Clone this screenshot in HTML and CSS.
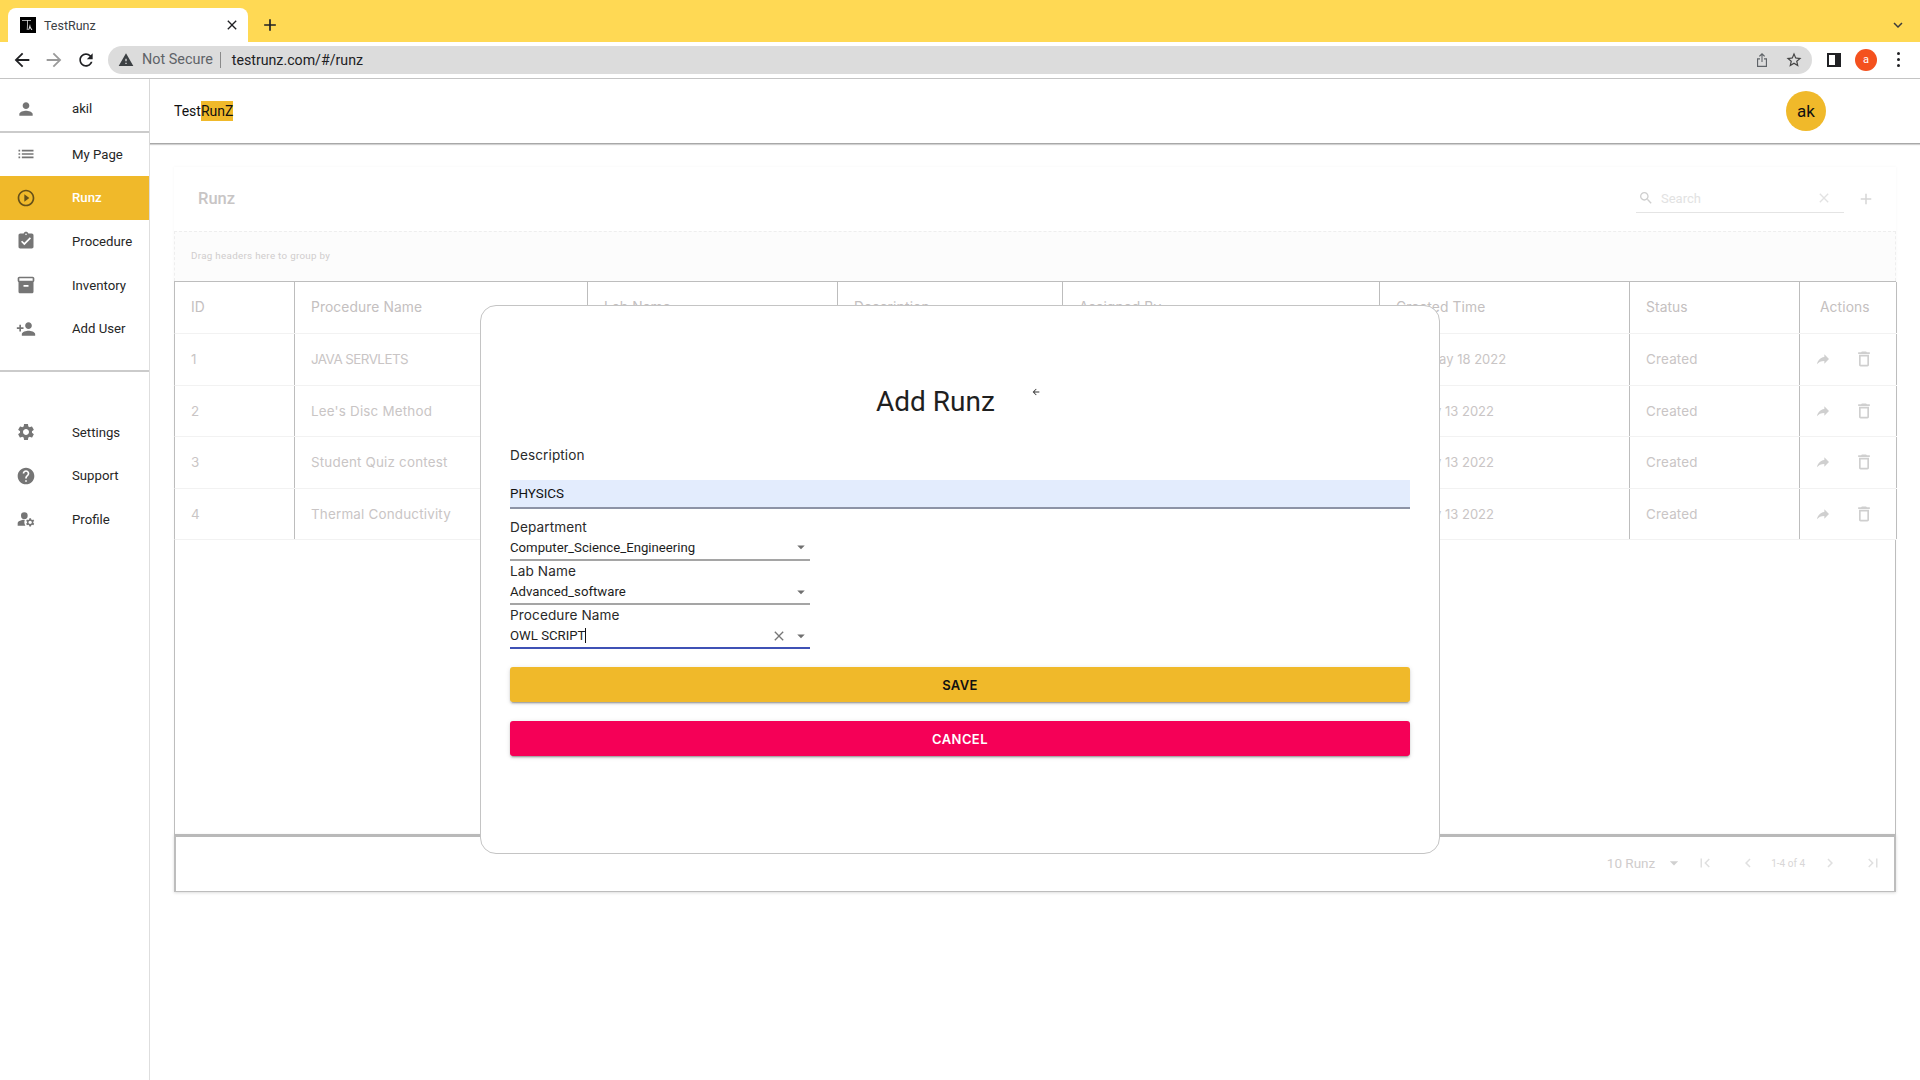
FILE: index.html
```html
<!DOCTYPE html>
<html lang="en">
<head>
<meta charset="utf-8">
<title>TestRunz</title>
<link rel="stylesheet" href="styles.css">
</head>
<body>
<svg class="defs" width="0" height="0" aria-hidden="true">
  <symbol id="i-person" viewBox="0 0 24 24"><path d="M12 12c2.21 0 4-1.79 4-4s-1.79-4-4-4-4 1.79-4 4 1.79 4 4 4zm0 2c-2.67 0-8 1.34-8 4v2h16v-2c0-2.66-5.33-4-8-4z"/></symbol>
  <symbol id="i-list" viewBox="0 0 24 24"><path d="M3 13h2v-2H3v2zm0 4h2v-2H3v2zm0-8h2V7H3v2zm4 4h14v-2H7v2zm0 4h14v-2H7v2zM7 7v2h14V7H7z"/></symbol>
  <symbol id="i-play" viewBox="0 0 24 24"><path d="M10 16.5l6-4.5-6-4.5v9zM12 2C6.48 2 2 6.48 2 12s4.48 10 10 10 10-4.48 10-10S17.52 2 12 2zm0 18c-4.41 0-8-3.59-8-8s3.59-8 8-8 8 3.59 8 8-3.59 8-8 8z"/></symbol>
  <symbol id="i-assign" viewBox="0 0 24 24"><path d="M19 3h-4.18C14.4 1.84 13.3 1 12 1c-1.3 0-2.4.84-2.82 2H5c-1.1 0-2 .9-2 2v14c0 1.1.9 2 2 2h14c1.1 0 2-.9 2-2V5c0-1.1-.9-2-2-2zm-7 0c.55 0 1 .45 1 1s-.45 1-1 1-1-.45-1-1 .45-1 1-1zm-2 14l-4-4 1.41-1.41L10 14.17l6.59-6.59L18 9l-8 8z"/></symbol>
  <symbol id="i-box" viewBox="0 0 24 24"><path d="M20 2H4c-1 0-2 .9-2 2v3.01c0 .72.43 1.34 1 1.69V20c0 1.1 1.1 2 2 2h14c.9 0 2-.9 2-2V8.7c.57-.35 1-.97 1-1.69V4c0-1.1-1-2-2-2zm-5 12H9v-2h6v2zm5-7H4V4l16-.02V7z"/></symbol>
  <symbol id="i-adduser" viewBox="0 0 24 24"><path d="M15 12c2.21 0 4-1.79 4-4s-1.79-4-4-4-4 1.79-4 4 1.79 4 4 4zm-9-2V7H4v3H1v2h3v3h2v-3h3v-2H6zm9 4c-2.67 0-8 1.34-8 4v2h16v-2c0-2.66-5.33-4-8-4z"/></symbol>
  <symbol id="i-gear" viewBox="0 0 24 24"><path d="M19.14 12.94c.04-.3.06-.61.06-.94 0-.32-.02-.64-.07-.94l2.03-1.58c.18-.14.23-.41.12-.61l-1.92-3.32c-.12-.22-.37-.29-.59-.22l-2.39.96c-.5-.38-1.03-.7-1.62-.94l-.36-2.54c-.04-.24-.24-.41-.48-.41h-3.84c-.24 0-.43.17-.47.41l-.36 2.54c-.59.24-1.13.57-1.62.94l-2.39-.96c-.22-.08-.47 0-.59.22L2.74 8.87c-.12.21-.08.47.12.61l2.03 1.58c-.05.3-.09.63-.09.94s.02.64.07.94l-2.03 1.58c-.18.14-.23.41-.12.61l1.92 3.32c.12.22.37.29.59.22l2.39-.96c.5.38 1.03.7 1.62.94l.36 2.54c.05.24.24.41.48.41h3.84c.24 0 .44-.17.47-.41l.36-2.54c.59-.24 1.13-.56 1.62-.94l2.39.96c.22.08.47 0 .59-.22l1.92-3.32c.12-.22.07-.47-.12-.61l-2.01-1.58zM12 15.6c-1.98 0-3.6-1.62-3.6-3.6s1.62-3.6 3.6-3.6 3.6 1.62 3.6 3.6-1.62 3.6-3.6 3.6z"/></symbol>
  <symbol id="i-help" viewBox="0 0 24 24"><path d="M12 2C6.48 2 2 6.48 2 12s4.48 10 10 10 10-4.48 10-10S17.52 2 12 2zm1 17h-2v-2h2v2zm2.07-7.75l-.9.92C13.45 12.9 13 13.5 13 15h-2v-.5c0-1.1.45-2.1 1.17-2.83l1.24-1.26c.37-.36.59-.86.59-1.41 0-1.1-.9-2-2-2s-2 .9-2 2H8c0-2.21 1.79-4 4-4s4 1.79 4 4c0 .88-.36 1.68-.93 2.25z"/></symbol>
  <symbol id="i-manage" viewBox="0 0 24 24"><circle cx="10" cy="8" r="4"/><path d="M10.67 13.02C10.45 13.01 10.23 13 10 13c-2.42 0-4.68.67-6.61 1.82C2.51 15.34 2 16.32 2 17.35V20h9.26c-.79-1.13-1.26-2.51-1.26-4 0-1.07.25-2.07.67-2.98zM20.75 16c0-.22-.03-.42-.06-.63l1.14-1.01-1-1.73-1.45.49c-.32-.27-.68-.48-1.08-.63L18 11h-2l-.3 1.49c-.4.15-.76.36-1.08.63l-1.45-.49-1 1.73 1.14 1.01c-.03.21-.06.41-.06.63s.03.42.06.63l-1.14 1.01 1 1.73 1.45-.49c.32.27.68.48 1.08.63L16 21h2l.3-1.49c.4-.15.76-.36 1.08-.63l1.45.49 1-1.73-1.14-1.01c.03-.21.06-.41.06-.63zM17 18c-1.1 0-2-.9-2-2s.9-2 2-2 2 .9 2 2-.9 2-2 2z"/></symbol>
  <symbol id="i-forward" viewBox="0 0 24 24"><path d="M14 9V5l7 7-7 7v-4.1c-5 0-8.5 1.6-11 5.1 1-5 4-10 11-11z"/></symbol>
  <symbol id="i-trash" viewBox="0 0 24 24"><path d="M6 19c0 1.1.9 2 2 2h8c1.1 0 2-.9 2-2V7H6v12zM8 9h8v10H8V9zm7.5-5l-1-1h-5l-1 1H5v2h14V4z"/></symbol>
  <symbol id="i-search" viewBox="0 0 24 24"><path d="M15.5 14h-.79l-.28-.27C15.41 12.59 16 11.11 16 9.5 16 5.91 13.09 3 9.5 3S3 5.91 3 9.5 5.91 16 9.5 16c1.61 0 3.09-.59 4.23-1.57l.27.28v.79l5 4.99L20.49 19l-4.99-5zm-6 0C7.01 14 5 11.99 5 9.5S7.01 5 9.5 5 14 7.01 14 9.5 11.99 14 9.5 14z"/></symbol>
  <symbol id="i-clear" viewBox="0 0 24 24"><path d="M19 6.41L17.59 5 12 10.59 6.41 5 5 6.41 10.59 12 5 17.59 6.41 19 12 13.41 17.59 19 19 17.59 13.41 12z"/></symbol>
  <symbol id="i-add" viewBox="0 0 24 24"><path d="M19 13h-6v6h-2v-6H5v-2h6V5h2v6h6v2z"/></symbol>
  <symbol id="i-drop" viewBox="0 0 24 24"><path d="M7 10l5 5 5-5z"/></symbol>
  <symbol id="i-first" viewBox="0 0 24 24"><path d="M18.41 16.59L13.82 12l4.59-4.59L17 6l-6 6 6 6zM6 6h2v12H6z"/></symbol>
  <symbol id="i-prev" viewBox="0 0 24 24"><path d="M15.41 7.41L14 6l-6 6 6 6 1.41-1.41L10.83 12z"/></symbol>
  <symbol id="i-next" viewBox="0 0 24 24"><path d="M10 6L8.59 7.41 13.17 12l-4.58 4.59L10 18l6-6z"/></symbol>
  <symbol id="i-last" viewBox="0 0 24 24"><path d="M5.59 7.41L10.18 12l-4.59 4.59L7 18l6-6-6-6zM16 6h2v12h-2z"/></symbol>
  <symbol id="i-back" viewBox="0 0 24 24"><path d="M20 11H7.83l5.59-5.59L12 4l-8 8 8 8 1.41-1.41L7.83 13H20v-2z"/></symbol>
  <symbol id="i-reload" viewBox="0 0 24 24"><path d="M17.65 6.35C16.2 4.9 14.21 4 12 4c-4.42 0-7.99 3.58-7.99 8s3.57 8 7.99 8c3.73 0 6.84-2.55 7.73-6h-2.08c-.82 2.33-3.04 4-5.65 4-3.31 0-6-2.69-6-6s2.69-6 6-6c1.66 0 3.14.69 4.22 1.78L13 11h7V4l-2.35 2.35z"/></symbol>
  <symbol id="i-warn" viewBox="0 0 24 24"><path d="M1 21h22L12 2 1 21zm12-3h-2v-2h2v2zm0-4h-2v-4h2v4z"/></symbol>
  <symbol id="i-star" viewBox="0 0 24 24"><path d="M22 9.24l-7.19-.62L12 2 9.19 8.63 2 9.24l5.46 4.73L5.82 21 12 17.27 18.18 21l-1.63-7.03L22 9.24zM12 15.4l-3.76 2.27 1-4.28-3.32-2.88 4.38-.38L12 6.1l1.71 4.04 4.38.38-3.32 2.88 1 4.28L12 15.4z"/></symbol>
  <symbol id="i-share" viewBox="0 0 24 24"><path d="M12 1.5l4.6 4.6-1.2 1.2-2.6-2.6V15h-1.6V4.7L8.6 7.3 7.4 6.1 12 1.5zM4.5 9.5H9v1.7H6.2v9.6h11.6v-9.6H15V9.5h4.5v13h-15v-13z"/></symbol>
  <symbol id="i-chev" viewBox="0 0 24 24"><path d="M7.41 8.59L12 13.17l4.59-4.58L18 10l-6 6-6-6z"/></symbol>
</svg>

<header class="tabstrip">
  <div class="tab">
    <span class="favicon"><svg viewBox="0 0 16 16" class="fav-svg"><path d="M2 3h9v.8H8l-.4 9.2H6.8L7.200 3.800H2z"/><path d="M10 7l.6 3 1.900 3h-1.200L10 11l-1 2H8.200z"/></svg></span>
    <span class="tab-title">TestRunz</span>
    <svg class="ic tab-close"><use href="#i-clear"/></svg>
  </div>
  <svg class="ic new-tab"><use href="#i-add"/></svg>
  <svg class="ic tab-menu"><use href="#i-chev"/></svg>
</header>

<div class="toolbar">
  <svg class="ic nav-ic"><use href="#i-back"/></svg>
  <svg class="ic nav-ic nav-off"><use href="#i-back"/></svg>
  <svg class="ic nav-ic nav-reload"><use href="#i-reload"/></svg>
  <div class="omnibox">
    <svg class="ic warn"><use href="#i-warn"/></svg>
    <span class="not-secure">Not Secure</span>
    <span class="omni-sep"></span>
    <span class="url">testrunz.com/#/runz</span>
    <svg class="ic omni-share"><use href="#i-share"/></svg>
    <svg class="ic omni-star"><use href="#i-star"/></svg>
  </div>
  <span class="panel-ic"></span>
  <span class="chrome-avatar">a</span>
  <span class="dots"><i></i><i></i><i></i></span>
</div>

<div class="app">
  <aside class="sidebar">
    <div class="nav-item nav-user"><svg class="ic nav-svg"><use href="#i-person"/></svg><span>akil</span></div>
    <div class="rule"></div>
    <div class="nav-item"><svg class="ic nav-svg"><use href="#i-list"/></svg><span>My Page</span></div>
    <div class="nav-item active"><svg class="ic nav-svg"><use href="#i-play"/></svg><span>Runz</span></div>
    <div class="nav-item"><svg class="ic nav-svg"><use href="#i-assign"/></svg><span>Procedure</span></div>
    <div class="nav-item"><svg class="ic nav-svg"><use href="#i-box"/></svg><span>Inventory</span></div>
    <div class="nav-item"><svg class="ic nav-svg"><use href="#i-adduser"/></svg><span>Add User</span></div>
    <div class="rule rule-lower"></div>
    <div class="nav-item"><svg class="ic nav-svg"><use href="#i-gear"/></svg><span>Settings</span></div>
    <div class="nav-item"><svg class="ic nav-svg"><use href="#i-help"/></svg><span>Support</span></div>
    <div class="nav-item"><svg class="ic nav-svg"><use href="#i-manage"/></svg><span>Profile</span></div>
  </aside>

  <main class="main">
    <div class="topbar">
      <div class="brand">Test<span class="brand-mark">RunZ</span></div>
      <div class="user-avatar">ak</div>
    </div>
    <div class="content">
      <section class="card">
        <div class="card-head">
          <h2 class="card-title">Runz</h2>
          <div class="search">
            <svg class="ic search-ic"><use href="#i-search"/></svg>
            <span class="search-text">Search</span>
            <svg class="ic search-clear"><use href="#i-clear"/></svg>
          </div>
          <svg class="ic card-add"><use href="#i-add"/></svg>
        </div>
        <div class="group-bar">Drag headers here to group by</div>
        <div class="row row-head">
          <div class="cell">ID</div><div class="cell">Procedure Name</div><div class="cell">Lab Name</div><div class="cell">Description</div><div class="cell">Assigned By</div><div class="cell">Created Time</div><div class="cell">Status</div><div class="cell cell-actions-head">Actions</div>
        </div>
        <div class="row">
          <div class="cell">1</div><div class="cell cell-upper">JAVA SERVLETS</div><div class="cell"></div><div class="cell"></div><div class="cell"></div><div class="cell cell-date">Wed May 18 2022</div><div class="cell">Created</div>
          <div class="cell actions"><svg class="ic act"><use href="#i-forward"/></svg><svg class="ic act"><use href="#i-trash"/></svg></div>
        </div>
        <div class="row">
          <div class="cell">2</div><div class="cell">Lee's Disc Method</div><div class="cell"></div><div class="cell"></div><div class="cell"></div><div class="cell cell-date">Fri May 13 2022</div><div class="cell">Created</div>
          <div class="cell actions"><svg class="ic act"><use href="#i-forward"/></svg><svg class="ic act"><use href="#i-trash"/></svg></div>
        </div>
        <div class="row">
          <div class="cell">3</div><div class="cell">Student Quiz contest</div><div class="cell"></div><div class="cell"></div><div class="cell"></div><div class="cell cell-date">Fri May 13 2022</div><div class="cell">Created</div>
          <div class="cell actions"><svg class="ic act"><use href="#i-forward"/></svg><svg class="ic act"><use href="#i-trash"/></svg></div>
        </div>
        <div class="row">
          <div class="cell">4</div><div class="cell">Thermal Conductivity</div><div class="cell"></div><div class="cell"></div><div class="cell"></div><div class="cell cell-date">Fri May 13 2022</div><div class="cell">Created</div>
          <div class="cell actions"><svg class="ic act"><use href="#i-forward"/></svg><svg class="ic act"><use href="#i-trash"/></svg></div>
        </div>
        <div class="table-fill"></div>
        <div class="pager">
          <span class="pager-size">10 Runz</span>
          <svg class="ic pager-drop"><use href="#i-drop"/></svg>
          <svg class="ic pg pg-first"><use href="#i-first"/></svg>
          <svg class="ic pg pg-prev"><use href="#i-prev"/></svg>
          <span class="pager-count">1-4 of 4</span>
          <svg class="ic pg pg-next"><use href="#i-next"/></svg>
          <svg class="ic pg pg-last"><use href="#i-last"/></svg>
        </div>
      </section>
    </div>
  </main>
</div>

<div class="modal">
  <div class="modal-head">
    <h1 class="modal-title">Add Runz</h1>
    <svg class="ic modal-back"><use href="#i-back"/></svg>
  </div>
  <div class="field-label desc-label">Description</div>
  <div class="desc-input">PHYSICS</div>
  <div class="select select-first">
    <div class="field-label">Department</div>
    <div class="select-value"><span>Computer_Science_Engineering</span><svg class="ic sel-drop"><use href="#i-drop"/></svg></div>
  </div>
  <div class="select">
    <div class="field-label">Lab Name</div>
    <div class="select-value"><span>Advanced_software</span><svg class="ic sel-drop"><use href="#i-drop"/></svg></div>
  </div>
  <div class="select select-focus">
    <div class="field-label">Procedure Name</div>
    <div class="select-value"><span class="caret">OWL SCRIPT</span><svg class="ic sel-clear"><use href="#i-clear"/></svg><svg class="ic sel-drop"><use href="#i-drop"/></svg></div>
  </div>
  <div class="btn btn-save">SAVE</div>
  <div class="btn btn-cancel">CANCEL</div>
</div>
</body>
</html>
```

FILE: styles.css
```css
* { box-sizing: border-box; }
html, body { margin: 0; height: 1080px; overflow: hidden; background: #fff; }
body { position: relative; font-family: Roboto, "Liberation Sans", sans-serif; color: #202124; }
.defs { position: absolute; }
.ic { display: block; width: 24px; height: 24px; fill: currentColor; flex: none; }

/* browser chrome */
.tabstrip { height: 42px; background: #ffd954; display: flex; align-items: flex-end; padding-left: 8px; }
.tab { width: 240px; height: 34px; background: #fff; border-radius: 8px 8px 0 0; display: flex; align-items: center; padding: 0 8px 0 12px; }
.favicon { width: 16px; height: 16px; background: #000; display: block; margin-right: 8px; }
.fav-svg { display: block; width: 16px; height: 16px; fill: #ddd; }
.tab-title { font-size: 12.5px; color: #3c4043; flex: 1; }
.tab-close { width: 16px; height: 16px; color: #202124; }
.new-tab { width: 20px; height: 20px; margin: 0 0 7px 12px; color: #202124; }
.tab-menu { width: 18px; height: 18px; margin: 0 13px 8px auto; color: #3c3c3c; }

.toolbar { height: 37px; background: #fff; border-bottom: 1px solid #c4c4c4; display: flex; align-items: center; padding: 0 0 1px 11px; }
.nav-ic { width: 22px; height: 22px; margin-right: 10px; color: #202124; }
.nav-off { transform: scaleX(-1); color: #9a9a9a; }
.nav-reload { width: 20px; height: 20px; margin: 0 12px 0 1px; }
.omnibox { width: 1704px; height: 28px; background: #dcdcdc; border-radius: 14px; display: flex; align-items: center; padding-left: 10px; }
.warn { width: 16px; height: 16px; color: #3c4043; margin-right: 8px; }
.not-secure { font-size: 14.4px; color: #5f6368; }
.omni-sep { width: 1px; height: 16px; background: #8a8a8a; margin: 0 11px 0 7px; }
.url { font-size: 14.2px; color: #202124; flex: 1; }
.omni-share { width: 16px; height: 16px; color: #5f6368; margin-right: 15px; }
.omni-star { width: 18px; height: 18px; color: #444; margin-right: 9px; }
.panel-ic { width: 14px; height: 14px; border: 2px solid #202124; border-right-width: 6px; background: #fff; margin-left: 15px; }
.chrome-avatar { width: 22px; height: 22px; border-radius: 50%; background: #f4511e; color: #fff; font-size: 11px; display: flex; align-items: center; justify-content: center; margin-left: 14px; }
.dots { display: flex; flex-direction: column; gap: 2.5px; margin-left: 20px; }
.dots i { display: block; width: 3.4px; height: 3.4px; border-radius: 50%; background: #202124; }

/* app */
.app { display: flex; height: 1001px; }
.sidebar { width: 150px; border-right: 1px solid #dedede; flex: none; }
.nav-item { height: 43.6px; display: flex; align-items: center; font-size: 13.2px; color: #262626; padding-left: 16px; }
.nav-svg { width: 20px; height: 20px; color: #757575; margin-right: 36px; }
.nav-user { height: 51.5px; padding-top: 8px; }
.active { background: #f0b92a; color: #fff; font-weight: 500; }
.active .nav-svg { color: #665019; }
.rule { height: 2px; background: #cbcbcb; }
.rule-lower { margin: 20px 0 38px; }

.main { flex: 1; min-width: 0; }
.topbar { height: 65px; border-bottom: 1px solid #a8a8a8; box-shadow: 0 1px 1px rgba(0,0,0,.18); display: flex; align-items: center; justify-content: space-between; padding: 0 94px 0 24px; }
.brand { font-size: 14px; color: #111; }
.brand-mark { background: #f0b92a; padding: 2px 0; }
.user-avatar { width: 40px; height: 40px; border-radius: 50%; background: #f0b92a; color: #111; font-size: 17px; display: flex; align-items: center; justify-content: center; }

.content { padding: 23px 24px 0; }
.card { width: 1722px; font-family: Inter, "Open Sans", sans-serif; color: #c9c5c5; box-shadow: 0 0 3px rgba(0,0,0,.04); }
.card-head { height: 64px; display: flex; align-items: center; padding: 0 24px; }
.card-title { flex: 1; margin: 0 0 2px; font: 500 16.5px Roboto, sans-serif; color: #c8c5c5; }
.search { width: 208px; height: 29px; border-bottom: 1px solid #e4e4e4; display: flex; align-items: center; margin: 0 13px 1px 0; padding-left: 2px; }
.search-ic { width: 16px; height: 16px; color: #cfcfcf; }
.search-text { flex: 1; font: 13px Roboto, sans-serif; color: #e2e2e2; margin-left: 7px; }
.search-clear { width: 16px; height: 16px; color: #e2e2e2; margin-right: 12px; }
.card-add { width: 18px; height: 18px; color: #d6d6d6; margin-right: -3px; }
.group-bar { height: 50px; background: #fcfcfc; border-top: 1px dashed #eee; border-left: 1px dashed #eee; border-right: 1px dashed #eee; padding: 0 0 2px 16px; display: flex; align-items: center; font: 9.8px Roboto, sans-serif; letter-spacing: .3px; color: #d0cdcd; }

.row { display: grid; grid-template-columns: 120px 293px 250px 225px 317px 250px 170px 97px; height: 51.6px; border-bottom: 1px solid #f2f2f2; border-left: 1px solid #bdbdbd; }
.row-head { height: 53px; border-top: 1px solid #bdbdbd; color: #c4c0c0; }
.cell { border-right: 1px solid #bdbdbd; padding-left: 16px; display: flex; align-items: center; font-size: 13.4px; letter-spacing: .2px; white-space: nowrap; overflow: hidden; }
.row-head .cell { font-size: 13.8px; letter-spacing: .1px; padding-bottom: 2px; }
.row-head .cell-actions-head { padding-left: 20px; letter-spacing: .1px; }
.cell-upper { letter-spacing: -.55px; }
.cell-date { letter-spacing: 0; font-size: 13px; }
.actions { gap: 23px; padding-left: 15px; }
.act { width: 20px; height: 20px; color: #cfcfcf; }
.act:first-child { width: 16px; height: 16px; }
.table-fill { height: 294px; border-left: 1px solid #bdbdbd; border-right: 1px solid #bdbdbd; }
.pager { height: 58px; border: 1px solid #bdbdbd; border-top: 3px solid #b9b9b9; border-left-width: 2px; border-right-width: 2px; box-shadow: 0 1px 3px rgba(0,0,0,.12); display: flex; align-items: center; justify-content: flex-end; padding: 0 12px 2px 0; color: #cfcccc; }
.pager-size { font: 13.5px Roboto, sans-serif; margin-right: 9px; }
.pager-drop { width: 20px; height: 20px; color: #d0d0d0; margin-right: 12px; }
.pg { width: 18px; height: 18px; color: #e0e0e0; }
.pg-first { margin-right: 25px; }
.pg-prev { margin-right: 14px; }
.pager-count { font: 10px Roboto, sans-serif; color: #d8d6d6; margin-right: 16px; }
.pg-next { margin-right: 25px; }

/* modal */
.modal { position: absolute; left: 480px; top: 305px; width: 960px; height: 549px; background: #fff; border: 1px solid #c4c4c4; border-radius: 16px; padding: 0 29px; font-family: Inter, "Open Sans", sans-serif; color: #222; }
.modal-head { height: 100px; position: relative; padding-top: 74px; }
.modal-title { margin: 0 0 0 366px; font: 400 28px/44px Roboto, sans-serif; color: #1f1f1f; }
.modal-back { position: absolute; left: 521px; top: 81px; width: 10px; height: 10px; color: #333; }
.field-label { font-size: 13.6px; line-height: 20px; color: #2a2a2a; letter-spacing: .1px; }
.desc-label { margin-top: 39px; }
.desc-input { margin-top: 15px; height: 28.5px; background: #e3ecfd; border-bottom: 2px solid #8d93a6; font: 13.4px/28px Roboto, sans-serif; color: #111; }
.select { width: 300px; height: 44px; border-bottom: 2px solid #a5a5a5; }
.select-first { margin-top: 8px; height: 44.5px; }
.select-value { display: flex; align-items: center; height: 21.7px; font: 13.2px Roboto, sans-serif; color: #1d1d1d; }
.select-value span { flex: 1; }
.sel-drop { width: 18px; height: 18px; color: #6f6f6f; }
.sel-clear { width: 16px; height: 16px; color: #777; margin-right: 5px; }
.select-focus { border-bottom-color: #3f51b5; }
.caret::after { content: ""; display: inline-block; width: 1px; height: 15px; background: #111; vertical-align: -3px; }
.btn { height: 35px; border-radius: 3px; display: flex; align-items: center; justify-content: center; font-size: 13px; font-weight: 600; letter-spacing: .4px; box-shadow: 0 3px 1px -2px rgba(0,0,0,.2), 0 2px 2px rgba(0,0,0,.14), 0 1px 5px rgba(0,0,0,.12); }
.btn-save { margin-top: 18px; background: #f0b92a; color: #111; }
.btn-cancel { margin-top: 19px; background: #f50057; color: #fff; }
```
